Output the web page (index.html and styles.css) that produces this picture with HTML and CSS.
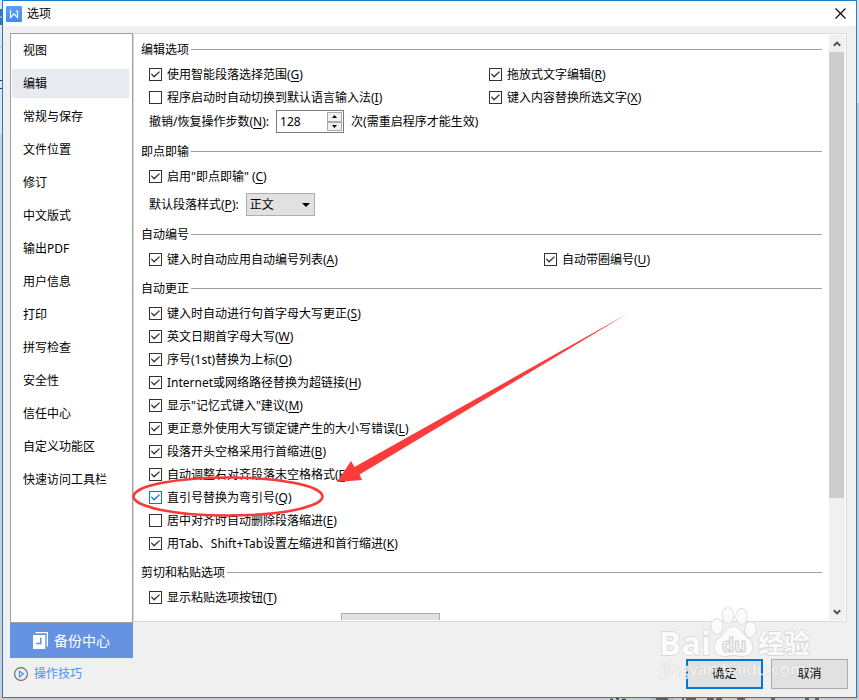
FILE: index.html
```html
<!DOCTYPE html>
<html lang="zh-CN">
<head>
<meta charset="utf-8">
<title>选项</title>
<link rel="stylesheet" href="styles.css">
</head>
<body>
<div class="window">
  <header class="titlebar">
    <svg class="logo" viewBox="0 0 16 16" aria-hidden="true">
      <defs><linearGradient id="lg" x1="0" y1="0" x2="0" y2="1"><stop offset="0" stop-color="#5c9ffa"/><stop offset="1" stop-color="#4289ef"/></linearGradient></defs>
      <rect width="16" height="16" rx="1" fill="url(#lg)"/>
      <path d="M4.500 4.200V11.500L8 7.800L11.500 11.500V5H9.800" fill="none" stroke="#fff" stroke-width="1.2"/>
    </svg>
    <h1 class="title">选项</h1>
    <button class="close" aria-label="关闭"><svg viewBox="0 0 11 11"><path d="M.5.5l10 10M10.5.5l-10 10" stroke="#000" stroke-width="1.1"/></svg></button>
  </header>

  <div class="body">
    <aside class="side">
      <nav class="nav">
        <a href="#">视图</a>
        <a href="#" class="current">编辑</a>
        <a href="#">常规与保存</a>
        <a href="#">文件位置</a>
        <a href="#">修订</a>
        <a href="#">中文版式</a>
        <a href="#">输出PDF</a>
        <a href="#">用户信息</a>
        <a href="#">打印</a>
        <a href="#">拼写检查</a>
        <a href="#">安全性</a>
        <a href="#">信任中心</a>
        <a href="#">自定义功能区</a>
        <a href="#">快速访问工具栏</a>
      </nav>
      <button class="backup">
        <svg viewBox="0 0 15 17" aria-hidden="true"><path d="M2.500 0H15V14.500H13.700V1.300H2.500z" fill="#fff"/><path d="M0 3h12.300v14H0z" fill="#fff"/><path d="M7.800 5.500v6H3.200" fill="none" stroke="#6593e2" stroke-width="1.5"/></svg>
        <span>备份中心</span>
      </button>
      <a class="tips" href="#">
        <svg viewBox="0 0 14 14" aria-hidden="true"><circle cx="7" cy="7" r="6.4" fill="none" stroke="#666" stroke-width="1.1"/><path d="M5.500 4.200v5.600L9.400 7z" fill="none" stroke="#4a90f0" stroke-width="1.2"/></svg>
        <span>操作技巧</span>
      </a>
    </aside>

    <main class="main">
      <div class="panel">
        <form class="options">
          <section>
            <h2>编辑选项</h2>
            <div class="pair">
              <label class="check"><input type="checkbox" checked><span>使用智能段落选择范围(<u>G</u>)</span></label>
              <label class="check"><input type="checkbox" checked><span>拖放式文字编辑(<u>R</u>)</span></label>
              <label class="check"><input type="checkbox"><span>程序启动时自动切换到默认语言输入法(<u>I</u>)</span></label>
              <label class="check"><input type="checkbox" checked><span>键入内容替换所选文字(<u>X</u>)</span></label>
            </div>
            <div class="field">
              <label for="undo">撤销/恢复操作步数(<u>N</u>):</label>
              <span class="spin">
                <input id="undo" type="number" value="128">
                <span class="steps">
                  <button type="button" aria-label="增加"><svg viewBox="0 0 5 3"><path d="M0 3h5L2.500 0z"/></svg></button>
                  <button type="button" aria-label="减少"><svg viewBox="0 0 5 3"><path d="M0 0h5L2.500 3z"/></svg></button>
                </span>
              </span>
              <span>次(需重启程序才能生效)</span>
            </div>
          </section>
          <section>
            <h2>即点即输</h2>
            <label class="check"><input type="checkbox" checked><span>启用"即点即输" (<u>C</u>)</span></label>
            <div class="field style-field">
              <label for="style">默认段落样式(<u>P</u>):</label>
              <span class="combo">
                <select id="style"><option>正文</option></select>
                <svg viewBox="0 0 8 4" aria-hidden="true"><path d="M0 0h8L4 4z"/></svg>
              </span>
            </div>
          </section>
          <section>
            <h2>自动编号</h2>
            <div class="pair wide">
              <label class="check"><input type="checkbox" checked><span>键入时自动应用自动编号列表(<u>A</u>)</span></label>
              <label class="check"><input type="checkbox" checked><span>自动带圈编号(<u>U</u>)</span></label>
            </div>
          </section>
          <section>
            <h2>自动更正</h2>
            <label class="check"><input type="checkbox" checked><span>键入时自动进行句首字母大写更正(<u>S</u>)</span></label>
            <label class="check"><input type="checkbox" checked><span>英文日期首字母大写(<u>W</u>)</span></label>
            <label class="check"><input type="checkbox" checked><span>序号(1st)替换为上标(<u>O</u>)</span></label>
            <label class="check"><input type="checkbox" checked><span>Internet或网络路径替换为超链接(<u>H</u>)</span></label>
            <label class="check"><input type="checkbox" checked><span>显示"记忆式键入"建议(<u>M</u>)</span></label>
            <label class="check"><input type="checkbox" checked><span>更正意外使用大写锁定键产生的大小写错误(<u>L</u>)</span></label>
            <label class="check"><input type="checkbox" checked><span>段落开头空格采用行首缩进(<u>B</u>)</span></label>
            <label class="check"><input type="checkbox" checked><span>自动调整右对齐段落末空格格式(<u>F</u>)</span></label>
            <label class="check active"><input type="checkbox" checked><span>直引号替换为弯引号(<u>Q</u>)</span></label>
            <label class="check"><input type="checkbox"><span>居中对齐时自动删除段落缩进(<u>E</u>)</span></label>
            <label class="check"><input type="checkbox" checked><span>用Tab、Shift+Tab设置左缩进和首行缩进(<u>K</u>)</span></label>
          </section>
          <section>
            <h2>剪切和粘贴选项</h2>
            <label class="check"><input type="checkbox" checked><span>显示粘贴选项按钮(<u>T</u>)</span></label>
            <div class="paste-row"><select aria-label="默认粘贴方式"></select></div>
          </section>
        </form>
        <div class="scrollbar">
          <button aria-label="向上滚动"><svg viewBox="0 0 8 6"><path d="M.8 4.800L4 1.600l3.200 3.200" fill="none" stroke="#505050" stroke-width="2"/></svg></button>
          <div class="track"><div class="thumb"></div></div>
          <button aria-label="向下滚动"><svg viewBox="0 0 8 6"><path d="M.8 1.200L4 4.400l3.200-3.200" fill="none" stroke="#505050" stroke-width="2"/></svg></button>
        </div>
      </div>
      <footer class="actions">
        <button class="primary">确定</button>
        <button>取消</button>
      </footer>
    </main>
  </div>
</div>

<svg class="backdrop-icons" width="210" height="2" viewBox="610 0 210 2" aria-hidden="true">
  <path d="M651 0h23v2h-23z" fill="#b4b8c0"/>
  <path d="M610 1.500h3M616 .5h2v1.500M622 1.500h4M656 1h12M682 1h2M686 1h10M707 1h7M716 1h6M737 1h8M771 1h4M805 1h4M815 1h4" stroke="#3c4250" stroke-width="1.5" fill="none"/>
</svg>

<svg class="annotation" width="500" height="210" viewBox="130 310 500 210" aria-hidden="true">
  <ellipse cx="228" cy="496.500" rx="94.500" ry="19" fill="none" stroke="#f93a3a" stroke-width="2.6"/>
  <path d="M337 482L351 461L354.500 467L627 314L359.500 474.500L362 480z" fill="#fc3b3a"/>
</svg>

<svg class="watermark" width="165" height="80" viewBox="655 604 165 80" aria-hidden="true">
  <g class="wm-shape">
    <ellipse cx="717" cy="626.500" rx="5.500" ry="7.500"/>
    <ellipse cx="728" cy="615.500" rx="5.500" ry="7.500"/>
    <ellipse cx="741.500" cy="616.500" rx="5.500" ry="7.500"/>
    <ellipse cx="750.500" cy="629.500" rx="5.500" ry="7.500"/>
    <path d="M733.500 627c-6 0-9 5-12 9-4 4-7 6-7 11 0 6 4 9 10 9 4 0 6-1 9-1s6 1 9 1c7 0 10-4 10-9 0-5-4-8-7-11-4-4-6-9-12-9z"/>
    <text class="wm-name" x="659" y="655">Bai</text>
    <text class="wm-cn" x="758" y="653">经验</text>
  </g>
  <text class="wm-du" x="722" y="652">du</text>
  <text class="wm-url" x="661" y="675">jingyan.baidu.com</text>
</svg>
</body>
</html>
```
FILE: styles.css
```css
* { box-sizing: border-box; }

body {
  margin: 0;
  height: 100vh;
  padding: 0 2px 2px;
  overflow: hidden;
  background:
    linear-gradient(#dde4ee 0 9px, #3678cc 9px 16px, #7fa9df 16px 18px, #2f72c8 18px 25px, #e2e5ea 25px 46px, #b8bcc2 46px 47px, #e2e5ea 47px 80px, #30343c 80px 81px, #e2e5ea 81px 88px, #30343c 88px 89px, #e2e5ea 89px 134px, #cfd1d4 134px) left / 2px 100% no-repeat,
    linear-gradient(#e4e4e4 0 103px, #c4c6ca 103px) right / 2px 100% no-repeat,
    #c8cbd0;
  color: #000;
  font: 12px/16px "Noto Sans", "Noto Sans CJK SC", sans-serif;
}

button, input, select { font: inherit; color: inherit; }
button { padding: 0; border: 0; }
svg { display: block; }
h1, h2 { margin: 0; font-size: 12px; font-weight: 400; line-height: 18px; }
a { color: inherit; text-decoration: none; }
u { text-underline-offset: 2px; }

.window {
  display: flex;
  flex-direction: column;
  height: 100%;
  border: 1px solid #1a80d4;
  background: #f0f0f0;
}

.titlebar {
  display: flex;
  align-items: center;
  gap: 5px;
  height: 25px;
  padding: 0 10px 0 3px;
  background: #fff;
}
.logo { width: 16px; height: 16px; }
.title { flex: 1; }
.close { background: none; }
.close svg { width: 11px; height: 11px; }

.body {
  flex: 1;
  display: flex;
  min-height: 0;
  padding: 7px 8px 0 7px;
}

.side { display: flex; flex-direction: column; width: 123px; }
.nav {
  flex: 1;
  display: flex;
  flex-direction: column;
  gap: 4px;
  padding: 2px 3px 0 1px;
  border: 1px solid #a0a0a0;
  background: #fff;
}
.nav a { padding: 7px 11px 6px; }
.nav .current { background: #e7eaef; }

.backup {
  display: flex;
  align-items: center;
  justify-content: center;
  gap: 6px;
  height: 35px;
  background: #6593e2;
  color: #fff;
  font-size: 14px;
}
.backup svg { width: 15px; height: 17px; }
.tips {
  display: flex;
  align-items: center;
  gap: 6px;
  height: 39px;
  padding: 0 4px 7px;
  color: #4a93f2;
}
.tips svg { width: 14px; height: 14px; }

.main { flex: 1; display: flex; flex-direction: column; min-width: 0; }
.panel {
  flex: 1;
  display: flex;
  min-height: 0;
  margin-right: 1px;
  padding: 1px 1px 1px 0;
  border: 1px solid #dadada;
  background: #fff;
}
.options { flex: 1; padding: 5px 7px 0; overflow: hidden; }
section { margin-bottom: 8px; padding-left: 8px; }
h2 {
  display: grid;
  grid-template-columns: auto 1fr;
  gap: 2px;
  height: 18px;
  margin: 0 0 5px -8px;
  line-height: 20px;
}
h2::after { content: ""; height: 1px; margin-top: 9px; background: #a0a0a0; }

.pair { display: grid; grid-template-columns: 340px 1fr; }
.pair.wide { grid-template-columns: 395px 1fr; }

.check { display: flex; align-items: center; gap: 5px; height: 23px; white-space: nowrap; }
.check input {
  appearance: none;
  display: grid;
  place-items: center;
  width: 13px;
  height: 13px;
  margin: 0;
  border: 1px solid #333;
  background: #fff;
  color: #333;
}
.check input:checked::before {
  content: "";
  width: 9px;
  height: 7px;
  background: currentColor;
  clip-path: polygon(0 45%, 8% 32%, 34% 68%, 90% 2%, 100% 14%, 34% 96%);
}
.check.active input { border-color: #0078d7; color: #0078d7; }

.field { display: flex; align-items: center; gap: 7px; height: 25px; }
.style-field { margin-top: 4px; }
.spin {
  display: flex;
  width: 68px;
  height: 23px;
  padding: 1px;
  border: 1px solid #7a7a7a;
  background: #fff;
}
.spin input {
  appearance: textfield;
  flex: 1;
  min-width: 0;
  padding: 0 2px;
  border: 0;
  outline: 0;
  background: none;
}
.spin input::-webkit-inner-spin-button { display: none; }
.steps { display: grid; grid-template-rows: 1fr 1fr; width: 15px; }
.steps button { display: grid; place-items: center; border: 1px solid #acacac; background: #f0f0f0; }
.steps svg { width: 5px; height: 3px; }

.combo { position: relative; }
.combo select {
  display: block;
  appearance: none;
  width: 69px;
  height: 23px;
  padding: 0 3px;
  border: 1px solid #adadad;
  border-radius: 0;
  background: #e1e1e1;
}
.combo svg { position: absolute; right: 5px; top: 10px; width: 8px; height: 4px; }

.paste-row { padding: 4px 0 0 192px; }
.paste-row select {
  display: block;
  appearance: none;
  width: 99px;
  height: 23px;
  border: 1px solid #adadad;
  border-radius: 0;
  background: #e1e1e1;
}

.scrollbar { display: flex; flex-direction: column; width: 16px; background: #f0f0f0; }
.scrollbar button { display: grid; place-items: center; height: 17px; background: #f0f0f0; }
.scrollbar svg { width: 8px; height: 6px; }
.track { flex: 1; }
.thumb { width: 15px; height: 81%; background: #cdcdcd; }

.actions {
  display: flex;
  justify-content: flex-end;
  align-items: flex-end;
  gap: 8px;
  height: 75px;
  padding-bottom: 8px;
}
.actions button {
  width: 77px;
  height: 30px;
  border: 1px solid #adadad;
  background: #e1e1e1;
}
.actions .primary { border: 2px solid #0078d7; }

.backdrop-icons { position: absolute; left: 610px; bottom: 0; }
.annotation { position: absolute; left: 130px; top: 310px; pointer-events: none; }
.watermark { position: absolute; right: 39px; bottom: 16px; pointer-events: none; }
.wm-shape { fill: #fbfbfb; stroke: #d4d4d4; stroke-width: 1.4; paint-order: stroke; }
.wm-name { font: 700 33px "Open Sans", sans-serif; }
.wm-cn { font: 700 26px "Noto Sans CJK SC", sans-serif; }
.wm-du { font: 700 19px "Open Sans", sans-serif; fill: #fbfbfb; stroke: #cfcfcf; stroke-width: 1.2; }
.wm-url { font: 17px "Open Sans", sans-serif; fill: #fff; fill-opacity: .8; stroke: #c8c8c8; stroke-opacity: .5; stroke-width: 1.2; paint-order: stroke; }
```
